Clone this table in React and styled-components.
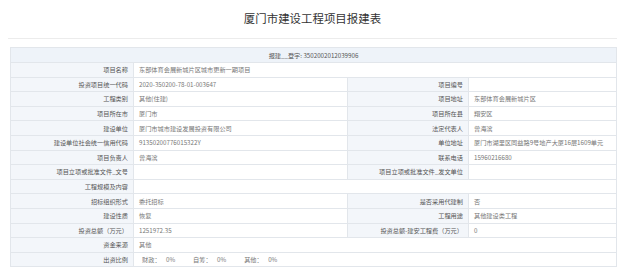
import styled, { createGlobalStyle } from "styled-components";

const GlobalStyle = createGlobalStyle`
  body {
    margin: 0;
    background: #fff;
    font-family: "Noto Sans CJK SC", "Noto Sans", sans-serif;
  }
`;

const rows = [
  { cells: [["项目名称", "东部体育会展新城片区城市更新一期项目", 3]] },
  { cells: [["投资项目统一代码", "2020-350200-78-01-003647"], ["项目编号", ""]] },
  { cells: [["工程类别", "其他(住建)"], ["项目地址", "东部体育会展新城片区"]] },
  { cells: [["项目所在市", "厦门市"], ["项目所在县", "翔安区"]] },
  { cells: [["建设单位", "厦门市城市建设发展投资有限公司"], ["法定代表人", "曾海滨"]] },
  { cells: [["建设单位社会统一信用代码", "91350200776015322Y"], ["单位地址", "厦门市湖里区同益路9号地产大厦16层1609单元"]] },
  { cells: [["项目负责人", "曾海滨"], ["联系电话", "15960216680"]] },
  { cells: [["项目立项或批准文件_文号", ""], ["项目立项或批准文件_发文单位", ""]] },
  { cells: [["工程规模及内容", "", 3]] },
  { cells: [["招标组织形式", "委托招标"], ["是否采用代建制", "否"]] },
  { cells: [["建设性质", "恢复"], ["工程用途", "其他建设类工程"]] },
  { cells: [["投资总额（万元）", "1251972.35"], ["投资总额-建安工程费（万元）", "0"]] },
  { cells: [["资金来源", "其他", 3]] },
];

const shares = [
  ["财政", "0%"],
  ["自筹", "0%"],
  ["其他", "0%"],
];

const App = () => {
  return (
    <Page>
      <GlobalStyle />
      <Header>
        <Title>厦门市建设工程项目报建表</Title>
      </Header>
      <Table>
        <colgroup>
          <col style={{ width: 123 }} />
          <col style={{ width: 214 }} />
          <col style={{ width: 121 }} />
          <col />
        </colgroup>
        <tbody>
          <tr>
            <Caption colSpan={4}>报建__登字: 3502002012039906</Caption>
          </tr>
          {rows.map((row, i) => (
            <tr key={i}>
              {row.cells.map(([label, value, span]) => [
                <Label key={label + "l"}>{label}</Label>,
                <Value key={label + "v"} colSpan={span || 1}>
                  {value}
                </Value>,
              ])}
            </tr>
          ))}
          <tr>
            <Label>出资比例</Label>
            <Value colSpan={3}>
              <Shares>
                {shares.map(([name, pct]) => (
                  <Share key={name}>
                    {name}： <span>{pct}</span>
                  </Share>
                ))}
              </Shares>
            </Value>
          </tr>
        </tbody>
      </Table>
    </Page>
  );
};
export default App;

const Page = styled.div`
  width: 607px;
  padding: 0 8px 0 10px;
`;

const Header = styled.div`
  display: flex;
  justify-content: center;
  align-items: center;
  height: 38px;
  margin-left: -2px;
  border-bottom: 1px solid #ececec;
`;

const Title = styled.h1`
  margin: 0 0 2px;
  font-size: 11.4px;
  font-weight: 400;
  color: #333;
  letter-spacing: 0.05px;
`;

const Table = styled.table`
  width: 100%;
  margin-top: 8px;
  border-collapse: collapse;
  table-layout: fixed;
  font-size: 6.2px;

  td {
    border: 1px solid #e2e6eb;
    height: 13.6px;
    padding: 0 5px;
    white-space: nowrap;
    overflow: hidden;
  }
`;

const Caption = styled.td`
  && {
    height: 14px;
  }
  text-align: center;
  background: #eef3f9;
  color: #555;
`;

const Label = styled.td`
  text-align: right;
  background: #f3f6fa;
  color: #555;
`;

const Value = styled.td`
  text-align: left;
  background: #fff;
  color: #777;
`;

const Shares = styled.div`
  display: flex;
  gap: 18px;
  padding-left: 3px;
`;

const Share = styled.span`
  span {
    padding-left: 4px;
  }
`;
